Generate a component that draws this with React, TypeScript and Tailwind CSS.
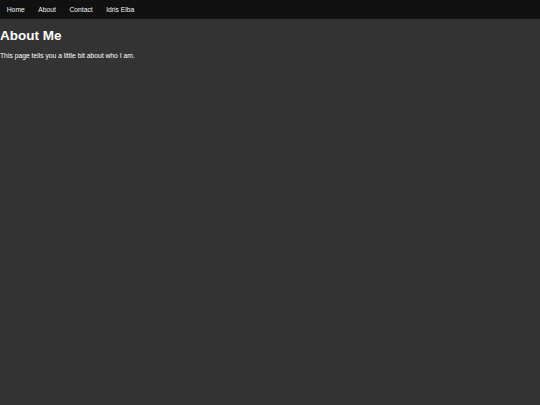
export default function App() {
  const links = ['Home', 'About', 'Contact', 'Idris Elba'];

  return (
    <div className="min-h-[405px] bg-[#333333] text-white font-['Liberation_Sans',Arial,sans-serif] overflow-hidden">
      <nav className="flex bg-[#111111]">
        {links.map((l) => (
          <a key={l} href="#" className="block px-[6.75px] py-[5.6px] text-[6.75px] leading-[1.15] text-[#f2f2f2]">
            {l}
          </a>
        ))}
      </nav>
      <h1 className="my-[9px] text-[13.5px] leading-[1.15] font-bold">About Me</h1>
      <p className="text-[6.75px] leading-[1.15]">This page tells you a little bit about who I am.</p>
    </div>
  );
}
